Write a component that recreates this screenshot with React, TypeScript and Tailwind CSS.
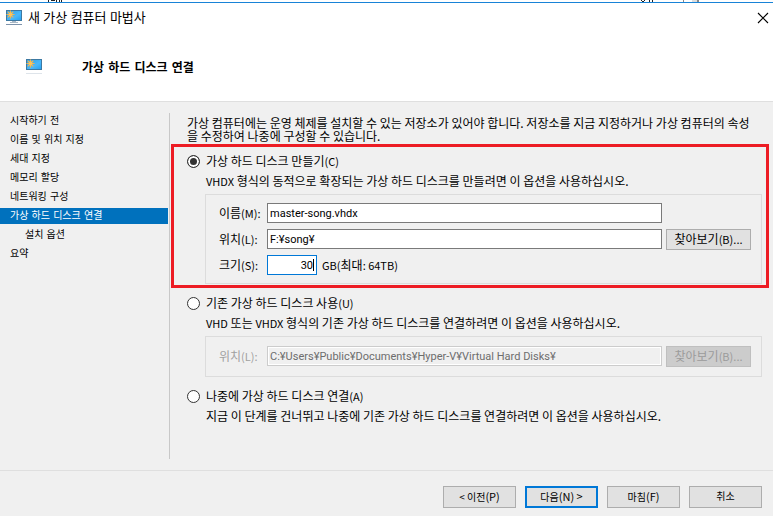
import type { ReactNode } from 'react';
import { clsx } from 'clsx';

const steps = [
  { label: '시작하기 전' },
  { label: '이름 및 위치 지정' },
  { label: '세대 지정' },
  { label: '메모리 할당' },
  { label: '네트워킹 구성' },
  { label: '가상 하드 디스크 연결', active: true },
  { label: '설치 옵션', nested: true },
  { label: '요약' },
];

function MonitorIcon({ faded = false }: { faded?: boolean }) {
  return (
    <svg viewBox="0 0 16 16" className="w-4 h-4 shrink-0" aria-hidden="true">
      <defs>
        <linearGradient id="screen" x1="0" y1="0" x2="1" y2="1">
          <stop offset="0" stopColor="#2fa0e8" />
          <stop offset="0.6" stopColor="#4bb8fa" />
          <stop offset="1" stopColor="#27a1f2" />
        </linearGradient>
      </defs>
      <rect x="0" y="0" width="16" height="11" fill="#3c79a3" />
      <rect x="1" y="1" width="14" height="9" fill="url(#screen)" />
      <g stroke="#f9b54a" strokeWidth="1.2">
        <path d="M4.5 0.5v8M0.5 4.5h8M1.7 1.7l5.6 5.6M7.3 1.7L1.7 7.3" />
      </g>
      <circle cx="4.5" cy="4.5" r="2" fill="#ffc35a" />
      <g opacity={faded ? 0.25 : 1}>
        {!faded && <path d="M6 11h4v1h2v1H4v-1h2z" fill="#a9b8c6" />}
        <path d="M0 14h16v1H0z" fill="#7d93ab" />
      </g>
    </svg>
  );
}

function Radio({ id, children, checked }: { id: string; children: ReactNode; checked?: boolean }) {
  return (
    <div className="flex items-center gap-1.5 h-4">
      <input
        type="radio"
        name="disk"
        id={id}
        defaultChecked={checked}
        className="appearance-none w-[13px] h-[13px] rounded-full border border-[#333] bg-white checked:bg-[#333] checked:shadow-[inset_0_0_0_2px_white]"
      />
      <label htmlFor={id}>{children}</label>
    </div>
  );
}

function Description({ id, children }: { id: string; children: ReactNode }) {
  return <p id={id} className="mt-1 ml-[19px] leading-4">{children}</p>;
}

function TextField({ id, value, disabled }: { id: string; value: string; disabled?: boolean }) {
  return (
    <input
      id={id}
      type="text"
      defaultValue={value}
      disabled={disabled}
      className="w-full h-5 px-0.5 border border-[#7a7a7a] bg-white font-['Roboto','Noto_Sans_CJK_KR',sans-serif] text-[11px] leading-4 disabled:border-[#ccc] disabled:bg-[#f0f0f0] disabled:text-[#6d6d6d] disabled:shadow-[inset_0_0_0_1px_white]"
    />
  );
}

function BrowseButton({ disabled }: { disabled?: boolean }) {
  return (
    <button
      type="button"
      disabled={disabled}
      className="ml-1 h-[21px] border border-[#adadad] bg-[#e1e1e1] leading-4 pb-0.5 disabled:border-[#bfbfbf] disabled:bg-[#ccc] disabled:text-[#9b9b9b]"
    >
      찾아보기<Key>(B)...</Key>
    </button>
  );
}

// Latin part of a caption, one step smaller than the Hangul around it
function Key({ children }: { children: ReactNode }) {
  return <span className="text-[11px]">{children}</span>;
}

function FooterButton({ children, primary }: { children: ReactNode; primary?: boolean }) {
  return (
    <button
      type="button"
      className={clsx(
        'w-[73px] h-[22px] bg-[#e1e1e1] text-[10px] leading-4 pb-0.5',
        primary ? 'border-2 border-[#0078d7]' : 'border border-[#adadad]'
      )}
    >
      {children}
    </button>
  );
}

export default function App() {
  return (
    <div className="min-h-screen flex flex-col bg-[#f0f0f0] text-black text-xs font-['Noto_Sans_CJK_KR',sans-serif]">
      {/* Sliver of the window behind the dialog */}
      <svg viewBox="0 0 773 2" preserveAspectRatio="xMinYMin slice" className="h-0.5 w-full bg-white" aria-hidden="true">
        <path d="M48 0h1v2h-1zM51 0h4v1h-4zM56 0h1v2h-1zM59 0h1v2h-1zM61 0h1v2h-1zM641 0h1v1h-1zM642 1h2v1h-2zM644 0h1v1h-1zM649 0h1v2h-1zM652 0h1v2h-1z" fill="#222" />
        <path d="M683 0h1v2h-1zM697 0h2v2h-2z" fill="#888" />
        <path d="M692 0h5v2h-5z" fill="#ddd" />
      </svg>

      <header className="bg-white border-t border-t-[#1883d7] border-b border-b-[#dfdfdf]">
        <div className="flex items-center h-[29px] pl-1.5 pr-1">
          <MonitorIcon />
          <h1 className="ml-1.5 flex-1 text-[13px] leading-5 pb-0.5 font-['Noto_Sans','Noto_Sans_CJK_KR',sans-serif]">새 가상 컴퓨터 마법사</h1>
          <button type="button" aria-label="닫기" className="w-[12px] h-[12px]">
            <svg viewBox="0 0 12 12" className="w-full h-full">
              <path d="M1 1l10 10M11 1L1 11" stroke="#000" strokeWidth="1.1" />
            </svg>
          </button>
        </div>
        <div className="flex items-center h-[69px] pl-[26px]">
          <MonitorIcon faded />
          <h2 className="ml-10 pt-0.5 font-bold font-['DejaVu_Sans','Noto_Sans_CJK_KR',sans-serif] leading-5">가상 하드 디스크 연결</h2>
        </div>
      </header>

      <div className="flex flex-1 py-[11px]">
        <nav className="w-[169px] shrink-0">
          <ol className="flex flex-col gap-[3px] mr-px font-['DejaVu_Sans','Noto_Sans_CJK_KR',sans-serif] text-[10px] leading-4">
            {steps.map((step) => (
              <li key={step.label} className={clsx(step.active && 'bg-[#0071bd] text-white')}>
                <a href="#" className={clsx('block', step.nested ? 'pl-[25px]' : 'pl-2.5')}>{step.label}</a>
              </li>
            ))}
          </ol>
        </nav>

        <main className="flex-1 min-w-0 flex flex-col gap-[11px] border-l border-[#c8c8c8] pl-[17px] pr-[11px] pt-[3px]">
          <p className="leading-[13px] pr-1.5">
            가상 컴퓨터에는 운영 체제를 설치할 수 있는 저장소가 있어야 합니다. 저장소를 지금 지정하거나 가상 컴퓨터의 속성을 수정하여 나중에 구성할 수 있습니다.
          </p>

          <section className="relative">
            <Radio id="create" checked>가상 하드 디스크 만들기<Key>(C)</Key></Radio>
            <Description id="create-desc">
              <Key>VHDX</Key> 형식의 동적으로 확장되는 가상 하드 디스크를 만들려면 이 옵션을 사용하십시오.
            </Description>
            <fieldset aria-labelledby="create-desc" className="mt-[5px] ml-[18px] border border-[#dcdcdc] py-2 pl-[13px] pr-2.5">
              <div className="grid grid-cols-[48px_1fr_89px] auto-rows-[20px] gap-y-1.5">
                <label htmlFor="name" className="leading-5">이름<Key>(M):</Key></label>
                <TextField id="name" value="master-song.vhdx" />
                <span />
                <label htmlFor="location" className="leading-5">위치<Key>(L):</Key></label>
                <TextField id="location" value="F:¥song¥" />
                <BrowseButton />
                <label htmlFor="size" className="leading-5">크기<Key>(S):</Key></label>
                <div className="flex items-center gap-[5px]">
                  <div className="relative">
                    <input
                      id="size"
                      type="text"
                      defaultValue="30"
                      className="block w-[50px] h-5 pr-[3px] border border-[#0078d7] bg-white text-right font-['Roboto','Noto_Sans_CJK_KR',sans-serif] text-[11px] leading-4"
                    />
                    <span className="absolute right-[3px] inset-y-1 w-px bg-black" />
                  </div>
                  <span className="leading-5"><Key>GB(</Key>최대<Key>: 64TB)</Key></span>
                </div>
              </div>
            </fieldset>
            {/* Highlight around the option to fill in */}
            <div className="absolute -top-[9px] -bottom-1 -left-4 -right-[7px] border-3 border-[#ed1c24] pointer-events-none" />
          </section>

          <section>
            <Radio id="existing">기존 가상 하드 디스크 사용<Key>(U)</Key></Radio>
            <Description id="existing-desc">
              <Key>VHD</Key> 또는 <Key>VHDX</Key> 형식의 기존 가상 하드 디스크를 연결하려면 이 옵션을 사용하십시오.
            </Description>
            <fieldset aria-labelledby="existing-desc" className="mt-[5px] ml-[18px] border border-[#dcdcdc] pt-[9px] pb-2.5 pl-[13px] pr-2.5">
              <div className="grid grid-cols-[48px_1fr_89px] auto-rows-[20px]">
                <label htmlFor="existing-location" className="leading-5 text-[#a0a0a0]">위치<Key>(L):</Key></label>
                <TextField id="existing-location" value="C:¥Users¥Public¥Documents¥Hyper-V¥Virtual Hard Disks¥" disabled />
                <BrowseButton disabled />
              </div>
            </fieldset>
          </section>

          <section>
            <Radio id="later">나중에 가상 하드 디스크 연결<Key>(A)</Key></Radio>
            <Description id="later-desc">
              지금 이 단계를 건너뛰고 나중에 기존 가상 하드 디스크를 연결하려면 이 옵션을 사용하십시오.
            </Description>
          </section>
        </main>
      </div>

      <footer className="flex justify-end gap-[9px] border-t border-[#dfdfdf] pt-[15px] pb-2 pr-[11px]">
        <FooterButton>&lt; 이전<Key>(P)</Key></FooterButton>
        <FooterButton primary>다음<Key>(N) &gt;</Key></FooterButton>
        <FooterButton>마침<Key>(F)</Key></FooterButton>
        <FooterButton>취소</FooterButton>
      </footer>
    </div>
  );
}
